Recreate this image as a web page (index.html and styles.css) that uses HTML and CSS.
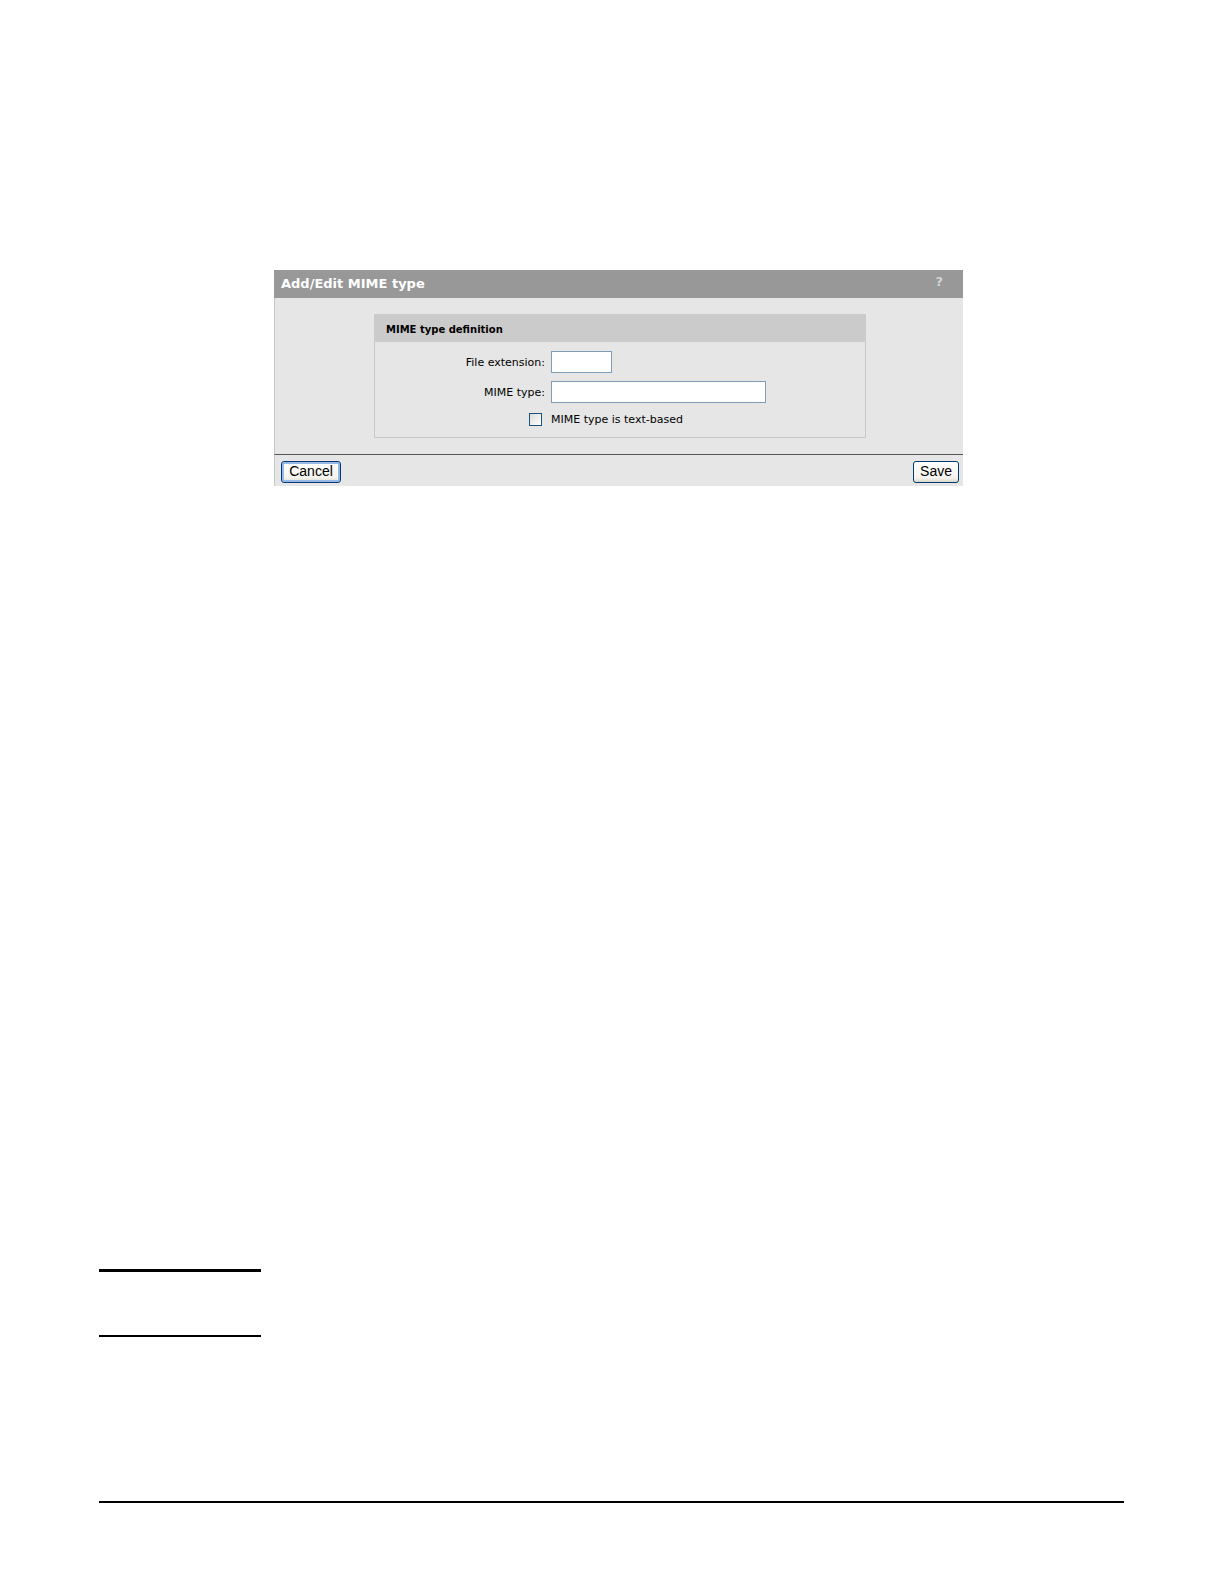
FILE: index.html
```html
<!DOCTYPE html>
<html lang="en">
<head>
<meta charset="utf-8">
<title>Add/Edit MIME type</title>
<link rel="stylesheet" href="styles.css">
</head>
<body>
<main class="page">
  <form class="dialog">
    <header class="dialog-header">
      <h1 class="dialog-title">Add/Edit MIME type</h1>
      <a class="help" href="#help">?</a>
    </header>
    <div class="dialog-body">
      <section class="group">
        <h2 class="group-title">MIME type definition</h2>
        <div class="fields">
          <label class="field-label" for="extension">File extension:</label>
          <input class="text-box text-box-short" id="extension" type="text">
          <label class="field-label" for="mime">MIME type:</label>
          <input class="text-box text-box-long" id="mime" type="text">
          <input class="tick" id="text-based" type="checkbox">
          <label class="tick-label" for="text-based">MIME type is text-based</label>
        </div>
      </section>
    </div>
    <footer class="dialog-footer">
      <button class="button button-focused" type="button">Cancel</button>
      <button class="button" type="submit">Save</button>
    </footer>
  </form>
  <aside class="note"></aside>
  <hr class="page-rule">
</main>
</body>
</html>
```
FILE: styles.css
```css
* {
  box-sizing: border-box;
}

body {
  margin: 0;
  background: #fff;
  color: #000;
  font-family: "DejaVu Sans", Verdana, sans-serif;
  font-size: 11px;
}

.page {
  display: flex;
  flex-direction: column;
  min-height: 100vh;
  padding: 270px 100px 81px 99px;
}

.dialog {
  margin: 0 161px 0 175px;
  background: #e6e6e6;
}

.dialog-header {
  display: flex;
  align-items: center;
  justify-content: space-between;
  height: 28px;
  padding: 0 20px 0 7px;
  background: #989898;
}

.dialog-title {
  margin: 0;
  color: #fff;
  font-size: 13px;
  line-height: 28px;
}

.help {
  padding-bottom: 4px;
  color: #d4d4d4;
  font-size: 13px;
  font-weight: bold;
  line-height: 24px;
  text-decoration: none;
}

.dialog-body {
  padding: 16px 97px 16px 99px;
  border-left: 1px solid #c8c8c8;
}

.group {
  border: 1px solid #c8c8c8;
  border-top: 0;
}

.group-title {
  margin: 0 -1px;
  padding: 4px 12px 0;
  background: #cbcbcb;
  font-size: 10px;
  line-height: 24px;
}

.fields {
  display: grid;
  grid-template-columns: 170px 1fr;
  grid-template-rows: 22px 22px 16px;
  gap: 8px 6px;
  align-items: center;
  padding: 9px 0 10px;
}

.field-label {
  text-align: right;
}

.text-box {
  height: 22px;
  margin: 0;
  padding: 2px 4px;
  border: 1px solid #7f9db9;
  border-radius: 0;
  background: #fff;
  font: inherit;
}

.text-box-short {
  width: 61px;
}

.text-box-long {
  width: 215px;
}

.tick {
  appearance: none;
  justify-self: end;
  width: 13px;
  height: 13px;
  margin: 0 3px;
  border: 1px solid #1c5180;
  background: linear-gradient(135deg, #dcdcd7, #fff);
}

.tick:checked {
  background: #1c5180;
}

.dialog-footer {
  display: flex;
  justify-content: space-between;
  padding: 6px 4px 3px 6px;
  border-top: 1px solid #555;
  border-left: 1px solid #c8c8c8;
}

.button {
  height: 22px;
  padding: 0 6px 2px;
  border: 1px solid #003c74;
  border-radius: 3px;
  background: linear-gradient(#fff, #f4f3ee 80%, #dcd7cb);
  color: #000;
  font-family: "Liberation Sans", Arial, sans-serif;
  font-size: 14px;
  line-height: 18px;
}

.button-focused {
  min-width: 60px;
  box-shadow: inset 0 0 0 2px #98b8ea;
}

.note {
  width: 162px;
  height: 68px;
  margin-top: auto;
  border-top: 3px solid #000;
  border-bottom: 2px solid #000;
}

.page-rule {
  width: 100%;
  margin: 164px 0 0;
  border: 0;
  border-top: 2px solid #000;
}
```
